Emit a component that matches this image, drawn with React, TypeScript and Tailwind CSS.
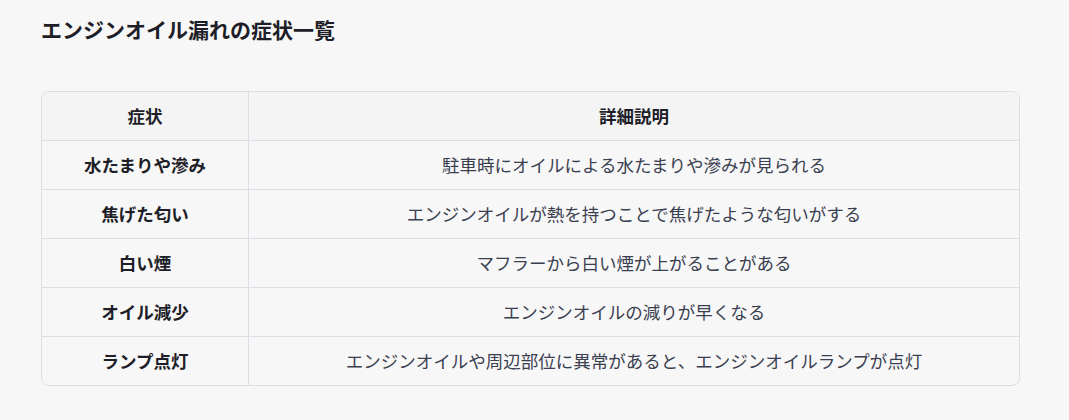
const rows: [string, string][] = [
  ["水たまりや滲み", "駐車時にオイルによる水たまりや滲みが見られる"],
  ["焦げた匂い", "エンジンオイルが熱を持つことで焦げたような匂いがする"],
  ["白い煙", "マフラーから白い煙が上がることがある"],
  ["オイル減少", "エンジンオイルの減りが早くなる"],
  ["ランプ点灯", "エンジンオイルや周辺部位に異常があると、エンジンオイルランプが点灯"],
];

export default function App() {
  return (
    <main
      className="min-h-[420px] w-full bg-[#f7f7f7] px-[41px] pt-[15px]"
      style={{ fontFamily: '"Noto Sans CJK JP", "Noto Sans", sans-serif' }}
    >
      <h2 className="text-[21px] font-bold leading-[28px] text-[#1e1e28]">
        エンジンオイル漏れの症状一覧
      </h2>

      <div className="mt-[48px] w-[979px] overflow-hidden rounded-lg border border-[#dddde6]">
        <div className="flex h-[48px] bg-[#f4f4f5] text-[17.5px] font-bold text-[#1e1e28]">
          <div className="flex w-[207px] items-center justify-center border-r border-[#dddde6]">症状</div>
          <div className="flex flex-1 items-center justify-center">詳細説明</div>
        </div>
        {rows.map(([name, desc]) => (
          <div key={name} className="flex h-[49px] border-t border-[#dddde6] text-[17.5px]">
            <div className="flex w-[207px] items-center justify-center border-r border-[#dddde6] font-bold text-[#1e1e28]">
              {name}
            </div>
            <div className="flex flex-1 items-center justify-center font-normal text-[#3a4050]">{desc}</div>
          </div>
        ))}
      </div>
    </main>
  );
}
